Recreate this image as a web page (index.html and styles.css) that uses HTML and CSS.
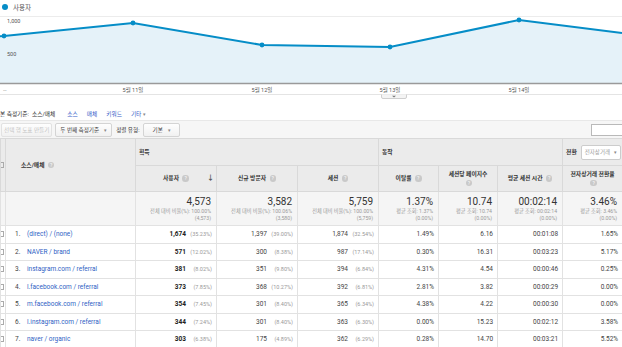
FILE: index.html
```html
<!DOCTYPE html>
<html lang="ko">
<head>
    <meta charset="UTF-8">
    <title>잠재고객 - 소스/매체</title>
    <link rel="stylesheet" href="styles.css">
</head>
<body>
    <div class="legend"><span class="dot"></span>사용자</div>
    <svg class="chart" width="622" height="86" viewBox="0 0 622 86">
        <line x1="0" y1="2.5" x2="622" y2="2.5" stroke="#ececec" />
        <line x1="0" y1="36.5" x2="622" y2="36.5" stroke="#e6e6e6" />
        <polygon fill="#e5f2f9" points="0,22 4,22 133,9 262,31 390,33 519,6 622,19 622,69 0,69" />
        <polyline fill="none" stroke="#058dc7" stroke-width="2" points="0,22.2 4,22 133,9 262,31 390,33 519,6 622,19" />
        <circle cx="4" cy="22" r="2.4" fill="#058dc7" />
        <circle cx="133" cy="9" r="2.4" fill="#058dc7" />
        <circle cx="262" cy="31" r="2.4" fill="#058dc7" />
        <circle cx="390" cy="33" r="2.4" fill="#058dc7" />
        <circle cx="519" cy="6" r="2.4" fill="#058dc7" />
        <line x1="0" y1="69.5" x2="622" y2="69.5" stroke="#9a9a9a" stroke-width="1.5" />
        <text class="axis" x="7" y="8.5">1,000</text>
        <text class="axis" x="7" y="41.5">500</text>
        <text class="axis" x="3" y="77">…</text>
        <text class="axis" x="133" y="77.5" text-anchor="middle">5월 11일</text>
        <text class="axis" x="262" y="77.5" text-anchor="middle">5월 12일</text>
        <text class="axis" x="390" y="77.5" text-anchor="middle">5월 13일</text>
        <text class="axis" x="519" y="77.5" text-anchor="middle">5월 14일</text>
        <line x1="0" y1="80.5" x2="622" y2="80.5" stroke="#e4e4e4" />
        <path d="M381.5 80.5 V83 Q381.5 84.5 383 84.5 H405 Q406.5 84.5 406.5 83 V80.5" fill="#f4f4f4" stroke="#cfcfcf" />
        <path d="M392 81.8 H396 L394 83.6 Z" fill="#777" />
    </svg>

    <div class="dims">
        <span class="dims-label">본 측정기준:</span>
        <span class="dims-current">소스/매체</span>
        <a class="dims-link">소스</a>
        <a class="dims-link">매체</a>
        <a class="dims-link">키워드</a>
        <a class="dims-link">기타 <span class="caret">▾</span></a>
    </div>

    <div class="toolbar">
        <span class="btn disabled">선택 행 도표 만들기</span>
        <span class="btn">두 번째 측정기준 <span class="caret">▾</span></span>
        <span class="sort-label">정렬 유형:</span>
        <span class="btn wide">기본 <span class="caret">▾</span></span>
        <span class="search"></span>
    </div>

    <table class="report">
        <colgroup>
            <col style="width:5px">
            <col style="width:130px">
            <col style="width:81px">
            <col style="width:81px">
            <col style="width:81px">
            <col style="width:60px">
            <col style="width:59px">
            <col style="width:65px">
            <col style="width:60px">
        </colgroup>
        <thead>
            <tr class="group-row">
                <th rowspan="2" class="check-col"><span class="check"></span></th>
                <th rowspan="2" class="dim-head">소스/매체 <span class="help">?</span></th>
                <th colspan="3" class="group">획득</th>
                <th colspan="3" class="group">동작</th>
                <th class="group conv">전환<span class="select">전자상거래 <span class="caret">▾</span></span></th>
            </tr>
            <tr class="col-row">
                <th class="sorted">사용자 <span class="help">?</span><span class="arrow">↓</span></th>
                <th>신규 방문자 <span class="help">?</span></th>
                <th>세션 <span class="help">?</span></th>
                <th>이탈률 <span class="help">?</span></th>
                <th>세션당 페이지수<br><span class="help">?</span></th>
                <th>평균 세션 시간 <span class="help">?</span></th>
                <th>전자상거래 전환율<br><span class="help">?</span></th>
            </tr>
        </thead>
        <tbody>
            <tr class="summary">
                <td class="check-col"></td>
                <td></td>
                <td><div class="big">4,573</div><div class="sub">전체 대비 비율(%): 100.00%</div><div class="sub">(4,573)</div></td>
                <td><div class="big">3,582</div><div class="sub">전체 대비 비율(%): 100.06%</div><div class="sub">(3,580)</div></td>
                <td><div class="big">5,759</div><div class="sub">전체 대비 비율(%): 100.00%</div><div class="sub">(5,759)</div></td>
                <td><div class="big">1.37%</div><div class="sub">평균 조회: 1.37%</div><div class="sub">(0.00%)</div></td>
                <td><div class="big">10.74</div><div class="sub">평균 조회: 10.74</div><div class="sub">(0.00%)</div></td>
                <td><div class="big">00:02:14</div><div class="sub">평균 조회: 00:02:14</div><div class="sub">(0.00%)</div></td>
                <td><div class="big">3.46%</div><div class="sub">평균 조회: 3.46%</div><div class="sub">(0.00%)</div></td>
            </tr>
            <tr>
                <td class="check-col"><span class="check"></span></td>
                <td class="dim"><span class="idx">1.</span><a>(direct) / (none)</a></td>
                <td><b>1,674</b><span class="pct">(35.23%)</span></td>
                <td>1,397<span class="pct">(39.00%)</span></td>
                <td>1,874<span class="pct">(32.54%)</span></td>
                <td>1.49%</td><td>6.16</td><td>00:01:08</td><td>1.65%</td>
            </tr>
            <tr>
                <td class="check-col"><span class="check"></span></td>
                <td class="dim"><span class="idx">2.</span><a>NAVER / brand</a></td>
                <td><b>571</b><span class="pct">(12.02%)</span></td>
                <td>300<span class="pct">(8.38%)</span></td>
                <td>987<span class="pct">(17.14%)</span></td>
                <td>0.30%</td><td>16.31</td><td>00:03:23</td><td>5.17%</td>
            </tr>
            <tr>
                <td class="check-col"><span class="check"></span></td>
                <td class="dim"><span class="idx">3.</span><a>instagram.com / referral</a></td>
                <td><b>381</b><span class="pct">(8.02%)</span></td>
                <td>351<span class="pct">(9.80%)</span></td>
                <td>394<span class="pct">(6.84%)</span></td>
                <td>4.31%</td><td>4.54</td><td>00:00:46</td><td>0.25%</td>
            </tr>
            <tr>
                <td class="check-col"><span class="check"></span></td>
                <td class="dim"><span class="idx">4.</span><a>l.facebook.com / referral</a></td>
                <td><b>373</b><span class="pct">(7.85%)</span></td>
                <td>368<span class="pct">(10.27%)</span></td>
                <td>392<span class="pct">(6.81%)</span></td>
                <td>2.81%</td><td>3.82</td><td>00:00:29</td><td>0.00%</td>
            </tr>
            <tr>
                <td class="check-col"><span class="check"></span></td>
                <td class="dim"><span class="idx">5.</span><a>m.facebook.com / referral</a></td>
                <td><b>354</b><span class="pct">(7.45%)</span></td>
                <td>301<span class="pct">(8.40%)</span></td>
                <td>365<span class="pct">(6.34%)</span></td>
                <td>4.38%</td><td>4.22</td><td>00:00:30</td><td>0.00%</td>
            </tr>
            <tr>
                <td class="check-col"><span class="check"></span></td>
                <td class="dim"><span class="idx">6.</span><a>l.instagram.com / referral</a></td>
                <td><b>344</b><span class="pct">(7.24%)</span></td>
                <td>301<span class="pct">(8.40%)</span></td>
                <td>363<span class="pct">(6.30%)</span></td>
                <td>0.00%</td><td>15.23</td><td>00:02:12</td><td>3.58%</td>
            </tr>
            <tr>
                <td class="check-col"><span class="check"></span></td>
                <td class="dim"><span class="idx">7.</span><a>naver / organic</a></td>
                <td><b>303</b><span class="pct">(6.38%)</span></td>
                <td>175<span class="pct">(4.89%)</span></td>
                <td>362<span class="pct">(6.29%)</span></td>
                <td>0.28%</td><td>14.70</td><td>00:03:21</td><td>5.52%</td>
            </tr>
        </tbody>
    </table>
</body>
</html>
```

FILE: styles.css
```css
* {
    box-sizing: border-box;
}
body {
    margin: 0;
    width: 622px;
    overflow: hidden;
    font-family: Roboto, "Noto Sans CJK KR", sans-serif;
    color: #333;
    background: #fff;
}
.legend {
    height: 14px;
    display: flex;
    align-items: center;
    gap: 5px;
    padding-left: 2px;
    font-size: 6.5px;
    color: #555;
}
.dot {
    width: 6px;
    height: 6px;
    border-radius: 50%;
    background: #058dc7;
}
.chart {
    display: block;
}
.axis {
    font-size: 5.5px;
    fill: #555;
    font-family: Roboto, "Noto Sans CJK KR", sans-serif;
}
.dims {
    height: 20px;
    display: flex;
    align-items: center;
    padding-top: 7px;
    font-size: 5.7px;
    color: #333;
}
.dims-label {
    margin-right: 3px;
}
.dims-current {
    margin-right: 12px;
}
.dims-link {
    color: #3a62c9;
    margin-right: 9px;
}
.caret {
    color: #888;
    font-size: 5px;
}
.toolbar {
    height: 18px;
    display: flex;
    align-items: center;
    gap: 3px;
    padding-left: 1px;
    background: #f6f6f6;
    border-top: 1px solid #e8e8e8;
    font-size: 5.6px;
}
.btn {
    height: 14px;
    display: flex;
    align-items: center;
    gap: 5px;
    padding: 0 4px;
    border: 1px solid #d4d4d4;
    border-radius: 2px;
    background: linear-gradient(#fefefe, #f1f1f1);
    color: #444;
}
.btn.wide {
    padding: 0 8px;
}
.btn.disabled {
    color: #c4c4c4;
    border-color: #e2e2e2;
    padding: 0 2px;
}
.sort-label {
    margin: 0 1px;
}
.search {
    margin-left: auto;
    margin-right: -6px;
    width: 37px;
    height: 12px;
    border: 1px solid #b9b9b9;
    background: #fff;
}
.report {
    width: 622px;
    table-layout: fixed;
    border-collapse: collapse;
    font-size: 6.5px;
}
.report th {
    background: #ebebeb;
    border: 1px solid #d9d9d9;
    font-weight: bold;
    font-size: 5.8px;
    color: #333;
    text-align: center;
    line-height: 9px;
    padding: 0 2px;
}
.group-row {
    height: 27px;
}
.col-row {
    height: 26px;
}
.report th.group {
    text-align: left;
    padding-left: 3px;
}
.report th.conv {
    padding-left: 3px;
    white-space: nowrap;
}
.select {
    display: inline-flex;
    align-items: center;
    gap: 4px;
    height: 15px;
    margin-left: 4px;
    padding: 0 3px;
    background: #fff;
    border: 1px solid #ccc;
    border-radius: 2px;
    color: #999;
    font-weight: normal;
    font-size: 5.5px;
    vertical-align: middle;
}
.report th.dim-head {
    text-align: left;
    padding-left: 15px;
}
.check-col {
    padding: 0 !important;
    text-align: left !important;
}
.check {
    display: block;
    width: 3px;
    height: 6px;
    border: 1px solid #aaa;
    border-left: none;
}
.help {
    display: inline-block;
    width: 6.5px;
    height: 6.5px;
    border-radius: 50%;
    background: #c9c9c9;
    color: #fff;
    font-size: 5px;
    line-height: 6.5px;
    font-weight: normal;
    text-align: center;
    vertical-align: middle;
    margin-left: 2px;
}
.sorted {
    position: relative;
}
.arrow {
    position: absolute;
    right: 2px;
    top: 8px;
    font-size: 7px;
    color: #555;
}
.report td {
    border: 1px solid #e2e2e2;
    height: 17.5px;
    padding: 0 4px;
    text-align: right;
    white-space: nowrap;
    color: #444;
}
.summary td {
    height: 34px;
    background: #f5f5f5;
    padding-right: 5px;
    vertical-align: middle;
}
.big {
    font-size: 10px;
    line-height: 12px;
    color: #333;
}
.sub {
    font-size: 5.2px;
    line-height: 6.5px;
    color: #9a9a9a;
}
.report td.dim {
    text-align: left;
    padding-left: 9px;
}
.idx {
    display: inline-block;
    width: 12px;
    color: #444;
}
.dim a {
    color: #2f5fc4;
}
.report td b {
    color: #222;
}
.pct {
    display: inline-block;
    width: 26px;
    text-align: right;
    font-size: 5.5px;
    color: #999;
}
```
